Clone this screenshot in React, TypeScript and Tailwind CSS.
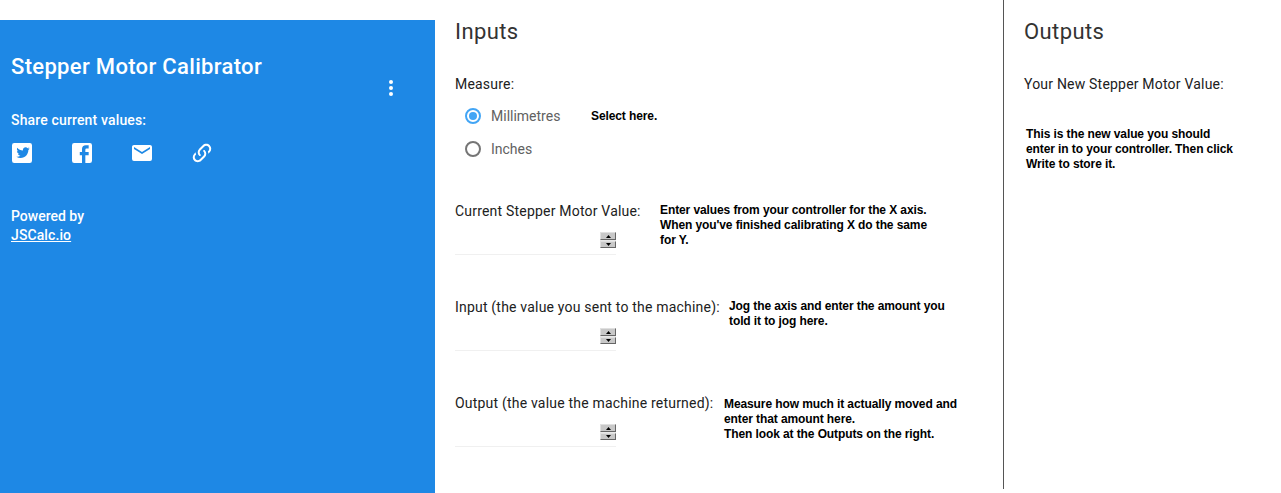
const roboto = "font-['Roboto',sans-serif]";
const note = "font-['Liberation_Sans',sans-serif] text-xs leading-[15px] font-bold tracking-[-0.1px] text-black";

function Spinner() {
  return (
    <div className="flex h-4 w-4 flex-col gap-px bg-[#e8e8e8]">
      <div className="flex h-[8px] items-center justify-center border border-[#666666] border-t-[#e0e0e0] border-l-[#e0e0e0] bg-[#c8c8c8]">
        <svg width="5" height="3" viewBox="0 0 5 3"><path d="M2.5 0 5 3H0z" fill="#000" /></svg>
      </div>
      <div className="flex h-[7px] items-center justify-center border border-[#666666] border-t-[#e0e0e0] border-l-[#e0e0e0] bg-[#c8c8c8]">
        <svg width="5" height="3" viewBox="0 0 5 3"><path d="M0 0h5L2.5 3z" fill="#000" /></svg>
      </div>
    </div>
  );
}

function NumberField({ label, gap, lines, className }: { label: string; gap: string; lines: string[]; className: string }) {
  return (
    <div className={`flex items-start ${className}`}>
      <div className="w-[161px] shrink-0">
        <div className="w-max text-sm leading-5 tracking-[0.2px] text-[#212121]">{label}</div>
        <div className="mt-[11px] flex h-[23px] w-[161px] items-start justify-end border-b border-[#f0f0f0]">
          <Spinner />
        </div>
      </div>
      <div className={`${note} ${gap}`}>
        {lines.map((line) => (
          <div key={line}>{line}</div>
        ))}
      </div>
    </div>
  );
}

export default function App() {
  return (
    <div className={`flex h-[493px] w-[1281px] overflow-hidden bg-white ${roboto}`}>
      <aside className="mt-5 w-[435px] shrink-0 bg-[#1e88e5] pl-[11px] text-white">
        <div className="relative">
          <h1 className="pt-8 text-[22px] leading-[30px] font-medium tracking-[0.33px]">Stepper Motor Calibrator</h1>
          <div className="absolute top-[60px] left-[378px] flex flex-col gap-[2px]">
            <span className="h-[4px] w-[4px] rounded-full bg-white" />
            <span className="h-[4px] w-[4px] rounded-full bg-white" />
            <span className="h-[4px] w-[4px] rounded-full bg-white" />
          </div>
        </div>
        <p className="mt-7 text-sm leading-5 font-medium tracking-[0.15px]">Share current values:</p>
        <div className="mt-[11px] -ml-px flex h-6 items-center gap-9">
          <svg viewBox="1.2 1.2 21.6 21.6" className="h-6 w-6 fill-white">
            <path d="M5,3H19A2,2 0 0,1 21,5V19A2,2 0 0,1 19,21H5A2,2 0 0,1 3,19V5A2,2 0 0,1 5,3M17.71,9.33C18.19,8.93 18.75,8.45 19,7.92C18.59,8.13 18.1,8.26 17.58,8.33C18.06,7.97 18.45,7.5 18.63,6.92C18.15,7.24 17.63,7.48 17.05,7.64C16.6,7.14 15.96,6.82 15.25,6.82C13.9,6.82 12.8,7.92 12.8,9.27C12.8,9.46 12.82,9.65 12.86,9.82C10.82,9.72 9,8.74 7.79,7.25C7.58,7.61 7.46,8.03 7.46,8.47C7.46,9.32 7.89,10.07 8.54,10.5C8.14,10.49 7.77,10.38 7.44,10.21V10.24C7.44,11.43 8.29,12.42 9.41,12.65C9.2,12.71 8.98,12.74 8.75,12.74C8.6,12.74 8.45,12.73 8.29,12.7C8.6,13.68 9.5,14.39 10.58,14.41C9.74,15.07 8.68,15.46 7.53,15.46C7.33,15.46 7.14,15.45 6.94,15.42C8.03,16.12 9.32,16.53 10.71,16.53C15.25,16.53 17.71,12.77 17.71,9.33Z" />
          </svg>
          <svg viewBox="1.2 1.2 21.6 21.6" className="h-6 w-6 fill-white">
            <path d="M5,3H19A2,2 0 0,1 21,5V19A2,2 0 0,1 19,21H5A2,2 0 0,1 3,19V5A2,2 0 0,1 5,3M18,5H15.5A3.5,3.5 0 0,0 12,8.5V11H10V14H12V21H15V14H18V11H15V9A1,1 0 0,1 16,8H18V5Z" />
          </svg>
          <svg viewBox="0 0 24 24" className="h-6 w-6 fill-white">
            <path d="M20,8L12,13L4,8V6L12,11L20,6M20,4H4C2.89,4 2,4.89 2,6V18A2,2 0 0,0 4,20H20A2,2 0 0,0 22,18V6C22,4.89 21.1,4 20,4Z" />
          </svg>
          <svg viewBox="0 0 24 24" className="h-6 w-6 fill-white">
            <path d="M10.59,13.41C11,13.8 11,14.44 10.59,14.83C10.2,15.22 9.56,15.22 9.17,14.83C7.22,12.88 7.22,9.71 9.17,7.76V7.76L12.71,4.22C14.66,2.27 17.83,2.27 19.78,4.22C21.73,6.17 21.73,9.34 19.78,11.29L18.29,12.78C18.3,11.96 18.17,11.14 17.89,10.36L18.36,9.88C19.54,8.71 19.54,6.81 18.36,5.64C17.19,4.46 15.29,4.46 14.12,5.64L10.59,9.17C9.41,10.34 9.41,12.24 10.59,13.41M13.41,9.17C13.8,8.78 14.44,8.78 14.83,9.17C16.78,11.12 16.78,14.29 14.83,16.24V16.24L11.29,19.78C9.34,21.73 6.17,21.73 4.22,19.78C2.27,17.83 2.27,14.66 4.22,12.71L5.71,11.22C5.7,12.04 5.83,12.86 6.11,13.65L5.64,14.12C4.46,15.29 4.46,17.19 5.64,18.36C6.81,19.54 8.71,19.54 9.88,18.36L13.41,14.83C14.59,13.66 14.59,11.76 13.41,10.59C13,10.2 13,9.56 13.41,9.17Z" />
          </svg>
        </div>
        <p className="mt-[41px] text-sm leading-5 font-medium">Powered by</p>
        <a className="block text-sm leading-[18px] font-medium tracking-[0.1px] underline">JSCalc.io</a>
      </aside>

      <main className="w-[568px] shrink-0 pl-5">
        <h2 className="pt-[17px] text-[22px] leading-[30px] tracking-[0.4px] text-[#333333]">Inputs</h2>
        <p className="mt-[27px] text-sm leading-5 tracking-[0.2px] text-[#212121]">Measure:</p>
        <div className="mt-[5px] flex h-[33px] items-center pl-[10px]">
          <span className="flex h-4 w-4 items-center justify-center rounded-full border-2 border-[#42a5f5]">
            <span className="h-2 w-2 rounded-full bg-[#42a5f5]" />
          </span>
          <span className="ml-[10px] w-[100px] text-sm text-[#616161]">Millimetres</span>
          <span className={`${note} mt-[2px]`}>Select here.</span>
        </div>
        <div className="flex h-[33px] items-center pl-[10px]">
          <span className="h-4 w-4 rounded-full border-2 border-[#757575]" />
          <span className="ml-[10px] text-sm text-[#616161]">Inches</span>
        </div>
        <NumberField
          className="mt-9"
          label="Current Stepper Motor Value:"
          gap="ml-[44px] mt-[2px] w-[280px]"
          lines={["Enter values from your controller for the X axis.", "When you've finished calibrating X do the same", "for Y."]}
        />
        <NumberField
          className="mt-[42px]"
          label="Input (the value you sent to the machine):"
          gap="ml-[113px] mt-[2px] w-[240px]"
          lines={["Jog the axis and enter the amount you", "told it to jog here."]}
        />
        <NumberField
          className="mt-[42px]"
          label="Output (the value the machine returned):"
          gap="ml-[108px] mt-1 w-[250px]"
          lines={["Measure how much it actually moved and", "enter that amount here.", "Then look at the Outputs on the right."]}
        />
      </main>

      <section className="h-[489px] flex-1 border-l border-[#555555] pl-5">
        <h2 className="pt-[17px] text-[22px] leading-[30px] tracking-[0.4px] text-[#333333]">Outputs</h2>
        <p className="mt-[27px] text-sm leading-5 tracking-[0.2px] text-[#212121]">Your New Stepper Motor Value:</p>
        <div className={`${note} mt-[33px] ml-[2px]`}>
          <div>This is the new value you should</div>
          <div>enter in to your controller. Then click</div>
          <div>Write to store it.</div>
        </div>
      </section>
    </div>
  );
}
